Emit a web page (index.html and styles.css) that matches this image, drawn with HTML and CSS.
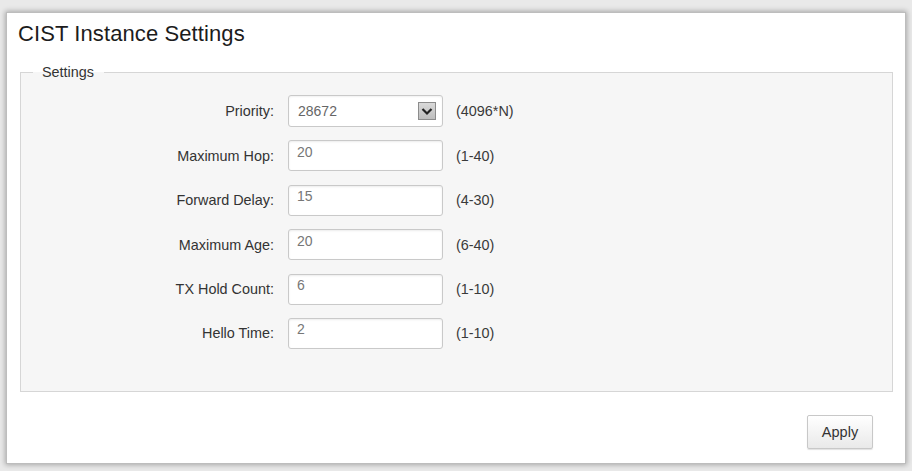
FILE: index.html
```html
<!DOCTYPE html>
<html>
<head>
<meta charset="utf-8">
<link rel="stylesheet" href="styles.css">
</head>
<body>
<div class="panel">
  <h1 class="title">CIST Instance Settings</h1>
  <fieldset class="group">
    <legend class="legend">Settings</legend>
    <div class="form">
      <label class="lbl">Priority:</label>
      <div class="select">
        <span class="select-val">28672</span>
        <span class="select-btn">
          <svg width="12" height="9" viewBox="0 0 12 9"><path d="M1.5 2 L6 6.5 L10.5 2" fill="none" stroke="#222" stroke-width="2.2"/></svg>
        </span>
      </div>
      <span class="hint">(4096*N)</span>

      <label class="lbl">Maximum Hop:</label>
      <input class="field" type="text" value="20">
      <span class="hint">(1-40)</span>

      <label class="lbl">Forward Delay:</label>
      <input class="field" type="text" value="15">
      <span class="hint">(4-30)</span>

      <label class="lbl">Maximum Age:</label>
      <input class="field" type="text" value="20">
      <span class="hint">(6-40)</span>

      <label class="lbl">TX Hold Count:</label>
      <input class="field" type="text" value="6">
      <span class="hint">(1-10)</span>

      <label class="lbl">Hello Time:</label>
      <input class="field" type="text" value="2">
      <span class="hint">(1-10)</span>
    </div>
  </fieldset>
  <div class="actions">
    <button class="btn" type="button">Apply</button>
  </div>
</div>
</body>
</html>
```
FILE: styles.css
```css
html, body {
  margin: 0;
  padding: 0;
}
body {
  background: #e9e9e9;
  font-family: "Liberation Sans", Arial, sans-serif;
  width: 912px;
  height: 471px;
  overflow: hidden;
  padding-top: 12px;
  padding-left: 6px;
  box-sizing: border-box;
}
.panel {
  width: 900px;
  height: 452px;
  box-sizing: border-box;
  background: #fff;
  border: 1px solid #bdbdbd;
  box-shadow: 0 0 5px 1px rgba(0,0,0,0.28);
  padding-top: 8px;
}
.title {
  margin: 0 0 17px 11px;
  font-size: 22px;
  line-height: 26px;
  font-weight: normal;
  color: #1c1c1c;
  letter-spacing: 0.1px;
}
.group {
  margin: 0 12px 0 13px;
  padding: 15px 0 42px 0;
  border: 1px solid #d6d6d6;
  background: #f6f6f6;
  min-width: 0;
}
.legend {
  margin-left: 12px;
  padding: 0 10px 0 9px;
  font-size: 14.4px;
  line-height: 16px;
  color: #333;
}
.form {
  display: grid;
  grid-template-columns: 253px 155px auto;
  column-gap: 14px;
  row-gap: 13.4px;
  align-items: center;
}
.lbl {
  text-align: right;
  font-size: 14.4px;
  color: #333;
}
.hint {
  font-size: 14.4px;
  color: #3a3a3a;
  margin-left: -1px;
}
.field {
  box-sizing: border-box;
  width: 155px;
  height: 31px;
  margin: 0;
  padding: 0 8px 8px 8px;
  border: 1px solid #c9c9c9;
  border-radius: 3px;
  background: #fff;
  box-shadow: inset 0 1px 2px rgba(0,0,0,0.08);
  font-family: "Liberation Sans", Arial, sans-serif;
  font-size: 14px;
  color: #777;
  outline: none;
}
.select {
  box-sizing: border-box;
  width: 155px;
  height: 32px;
  display: flex;
  align-items: center;
  justify-content: space-between;
  padding: 0 6px 0 9px;
  border: 1px solid #c9c9c9;
  border-radius: 3px;
  background: #fff;
  box-shadow: inset 0 1px 2px rgba(0,0,0,0.06);
}
.select-val {
  font-size: 14px;
  color: #666;
}
.select-btn {
  box-sizing: border-box;
  width: 18px;
  height: 18px;
  display: flex;
  align-items: center;
  justify-content: center;
  border: 1px solid #8c8c8c;
  background: linear-gradient(#d9d9d9, #bdbdbd);
}
.actions {
  display: flex;
  justify-content: flex-end;
  padding: 23px 32px 0 0;
}
.btn {
  box-sizing: border-box;
  width: 66px;
  height: 34px;
  border: 1px solid #c8c8c8;
  border-radius: 2px;
  background: linear-gradient(#ffffff, #e9e9e9);
  box-shadow: 0 1px 1px rgba(0,0,0,0.12);
  font-family: "Liberation Sans", Arial, sans-serif;
  font-size: 14.5px;
  color: #333;
  padding: 0;
}
```
